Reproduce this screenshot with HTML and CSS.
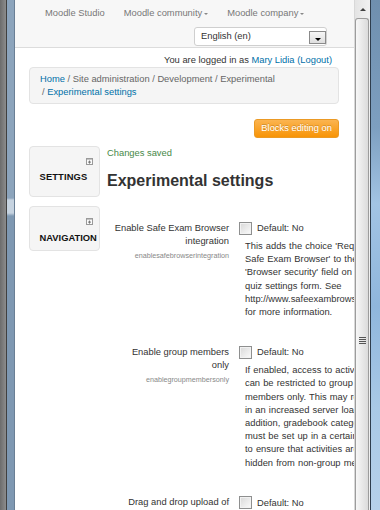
FILE: index.html
```html
<!DOCTYPE html>
<html lang="en">
<head>
<meta charset="utf-8">
<title>Experimental settings</title>
<link rel="stylesheet" href="styles.css">
</head>
<body>
<div class="window">
  <div class="frame-left">
    <span class="fl-gray"></span><span class="fl-dark"></span><span class="fl-blue"></span><span class="fl-edge"></span>
  </div>
  <div class="viewport">
    <header class="navbar">
      <nav class="nav">
        <a href="#">Moodle Studio</a>
        <a href="#">Moodle community<span class="caret"></span></a>
        <a href="#">Moodle company<span class="caret"></span></a>
      </nav>
      <div class="lang-row">
        <div class="select"><span>English (en)</span><span class="select-btn"><span class="arrow"></span></span></div>
      </div>
    </header>
    <div class="page">
      <div class="logininfo">You are logged in as <a href="#">Mary Lidia</a> <a href="#">(Logout)</a></div>
      <div class="breadcrumb"><a href="#">Home</a> / Site administration / Development / Experimental <span class="crumb-last">/ <a href="#">Experimental settings</a></span></div>
      <div class="button-row"><button class="btn-warning" type="button">Blocks editing on</button></div>
      <div class="layout">
        <aside class="blocks">
          <div class="block block-settings">
            <svg class="dock-icon" viewBox="0 0 7 7" width="7" height="7"><rect x="0.5" y="0.5" width="6" height="6" fill="#fafafa" stroke="#9a9a9a"/><rect x="1" y="1" width="5" height="1" fill="#c4c4c4"/><path d="M3.5 2.6v3M2 4.1h3" stroke="#777" stroke-width="1"/></svg>
            <h2>SETTINGS</h2>
          </div>
          <div class="block block-nav">
            <svg class="dock-icon" viewBox="0 0 7 7" width="7" height="7"><rect x="0.5" y="0.5" width="6" height="6" fill="#fafafa" stroke="#9a9a9a"/><rect x="1" y="1" width="5" height="1" fill="#c4c4c4"/><path d="M3.5 2.6v3M2 4.1h3" stroke="#777" stroke-width="1"/></svg>
            <h2>NAVIGATION</h2>
          </div>
        </aside>
        <main class="main">
          <div class="notify">Changes saved</div>
          <h1>Experimental settings</h1>
          <div class="setting setting-first">
            <div class="label">Enable Safe Exam Browser integration<div class="label-name">enablesafebrowserintegration</div></div>
            <div class="control">
              <div class="default"><span class="checkbox"></span><span>Default: No</span></div>
              <div class="desc">This adds the choice 'Require<br>Safe Exam Browser' to the<br>'Browser security' field on the<br>quiz settings form. See<br>http://www.safeexambrowser.org/<br>for more information.</div>
            </div>
          </div>
          <div class="setting">
            <div class="label">Enable group members only<div class="label-name">enablegroupmembersonly</div></div>
            <div class="control">
              <div class="default"><span class="checkbox"></span><span>Default: No</span></div>
              <div class="desc">If enabled, access to activities<br>can be restricted to group<br>members only. This may result<br>in an increased server load. In<br>addition, gradebook categories<br>must be set up in a certain way<br>to ensure that activities are<br>hidden from non-group members.</div>
            </div>
          </div>
          <div class="setting">
            <div class="label">Drag and drop upload of text/links<div class="label-name">dndallowtextandlinks</div></div>
            <div class="control">
              <div class="default"><span class="checkbox"></span><span>Default: No</span></div>
              <div class="desc">Enable or disable the dragging<br>and dropping of text and links<br>onto a course page.</div>
            </div>
          </div>
        </main>
      </div>
    </div>
  </div>
  <div class="scrollbar">
    <div class="sb-up"><span class="sb-arrow"></span></div>
    <div class="sb-thumb"><span class="sb-grip"></span></div>
  </div>
  <div class="desktop"></div>
</div>
</body>
</html>
```

FILE: styles.css
```css
* { box-sizing: border-box; }
html, body { margin: 0; padding: 0; }
body {
  width: 380px;
  height: 510px;
  overflow: hidden;
  font-family: "Liberation Sans", Arial, sans-serif;
  font-size: 9.35px;
  color: #333;
  background: #fff;
}
a { color: #0070a8; text-decoration: none; }

.window { display: flex; height: 510px; }

.frame-left { width: 15px; flex-shrink: 0; display: flex; }
.fl-gray { width: 6px; background: linear-gradient(to right, #6c6c6c, #8c8c8c); }
.fl-dark { width: 1px; background: #404040; }
.fl-blue {
  width: 7px;
  background: linear-gradient(to bottom, #8ca4bc 0, #8ca4bc 198px, #c6d3e0 200px, #c6d3e0 213px, #7e98b2 216px, #7e98b2 100%);
}
.fl-edge { width: 1px; background: #6a7f95; }

.viewport { width: 339px; flex-shrink: 0; overflow: hidden; background: #fff; }

.navbar {
  height: 48px;
  background: #f7f7f7;
  border-bottom: 1px solid #dcdcdc;
  padding-top: 6.5px;
}
.nav { display: flex; gap: 19px; padding-left: 30px; line-height: 13px; }
.nav a { color: #777; display: inline-flex; align-items: center; }
.caret {
  width: 0; height: 0;
  border-left: 2px solid transparent;
  border-right: 2px solid transparent;
  border-top: 2px solid #888;
  margin-left: 2px;
  margin-top: 1px;
}
.lang-row { display: flex; padding-left: 179px; margin-top: 7.5px; }
.select {
  width: 133px;
  height: 19px;
  border: 1px solid #cfcfcf;
  border-radius: 3px;
  background: #fff;
  display: flex;
  align-items: flex-start;
  justify-content: space-between;
  padding-left: 6px;
  line-height: 17px;
  color: #333;
}
.select-btn {
  width: 17px;
  height: 13px;
  margin-top: 3px;
  border: 1px solid #8a8a8a;
  background: linear-gradient(#f6f6f6, #dedede);
  display: flex;
  justify-content: center;
  align-items: flex-end;
  padding-bottom: 2px;
}
.arrow {
  width: 0; height: 0;
  border-left: 3px solid transparent;
  border-right: 3px solid transparent;
  border-top: 3px solid #000;
}

.page { padding: 0 15px 0 14px; }
.logininfo { text-align: right; line-height: 13px; margin-top: 5.5px; margin-right: 7px; color: #333; }
.breadcrumb {
  margin-top: 0.5px;
  background: #f5f5f5;
  border: 1px solid #e3e3e3;
  border-radius: 4px;
  padding: 4.5px 10px;
  line-height: 13px;
  color: #666;
}
.crumb-last { white-space: nowrap; margin-left: 2px; }
.button-row { display: flex; justify-content: flex-end; margin-top: 15px; }
.btn-warning {
  font: inherit;
  color: #fff;
  height: 19px;
  padding: 0 6px;
  border: 1px solid #eb9a25;
  border-radius: 3px;
  background: linear-gradient(#fbb450, #f89406);
  text-shadow: 0 -1px 0 rgba(0, 0, 0, 0.2);
  line-height: 17px;
}

.layout { display: flex; gap: 7px; margin-top: 8px; }
.blocks { width: 71px; flex-shrink: 0; display: flex; flex-direction: column; gap: 9px; }
.block {
  border: 1px solid #e3e3e3;
  border-radius: 4px;
  background: #f5f5f5;
  display: flex;
  flex-direction: column;
  padding: 11px 6px 0 9.5px;
}
.dock-icon { align-self: flex-end; display: block; }
.block h2 { margin: 0; font-size: 9.35px; font-weight: bold; color: #111; line-height: 13px; white-space: nowrap; }
.block-settings h2 { margin-top: 6px; margin-bottom: 12px; letter-spacing: 0.15px; }
.block-nav h2 { margin-top: 6.5px; margin-bottom: 5.5px; }

.main { width: 272px; flex-shrink: 0; }
.notify { color: #468847; line-height: 13px; margin-top: 0.5px; }
.main h1 { font-size: 16px; line-height: 20px; margin: 11.5px 0 0; font-weight: bold; color: #333; }

.setting { display: grid; grid-template-columns: 122px 150px; column-gap: 10px; margin-top: 26.5px; }
.setting-first { margin-top: 30.5px; }
.label { text-align: right; padding-left: 6.5px; line-height: 13px; color: #333; }
.label-name { font-size: 7.2px; color: #888; line-height: 13px; margin-top: 1px; }
.control { padding-top: 0.5px; }
.default { display: flex; align-items: flex-start; gap: 5px; line-height: 13px; white-space: nowrap; }
.checkbox {
  width: 13px;
  height: 13px;
  flex-shrink: 0;
  margin-top: -0.5px;
  border: 1px solid #8e8f8f;
  background: linear-gradient(135deg, #d8d8d8, #fbfbfb);
  box-shadow: inset 0 0 0 1px #f2f2f2;
}
.desc { margin: 5px 0 0 6px; line-height: 13.2px; word-spacing: 0.5px; white-space: nowrap; color: #333; }

.scrollbar {
  width: 16px;
  flex-shrink: 0;
  border-left: 1px solid #d8d8d8;
  background: linear-gradient(to right, #e4e4e4, #f1f1f1);
  display: flex;
  flex-direction: column;
}
.sb-up { height: 18px; display: flex; align-items: center; justify-content: center; }
.sb-arrow {
  width: 0; height: 0;
  border-left: 3px solid transparent;
  border-right: 3px solid transparent;
  border-bottom: 3px solid #404040;
}
.sb-thumb {
  flex: 1;
  margin: 0 1px 0 0;
  border: 1px solid #9c9c9c;
  border-bottom: none;
  border-radius: 3px 3px 0 0;
  background: linear-gradient(to right, #f7f7f7, #dbdbdb);
  display: flex;
  justify-content: center;
  align-items: flex-start;
  padding-top: 317.5px;
}
.sb-grip {
  width: 7px;
  height: 7px;
  background: repeating-linear-gradient(to bottom, #555 0, #555 1px, transparent 1px, transparent 2px);
}

.desktop {
  width: 10px;
  flex-shrink: 0;
  border-left: 1px solid #2e3d4d;
  background: linear-gradient(to bottom, #6f8fae 0, #7d9fc0 25%, #a2c4e4 40%, #8fb6dc 60%, #a9c9e6 80%, #b6d1ea 100%);
}
```
